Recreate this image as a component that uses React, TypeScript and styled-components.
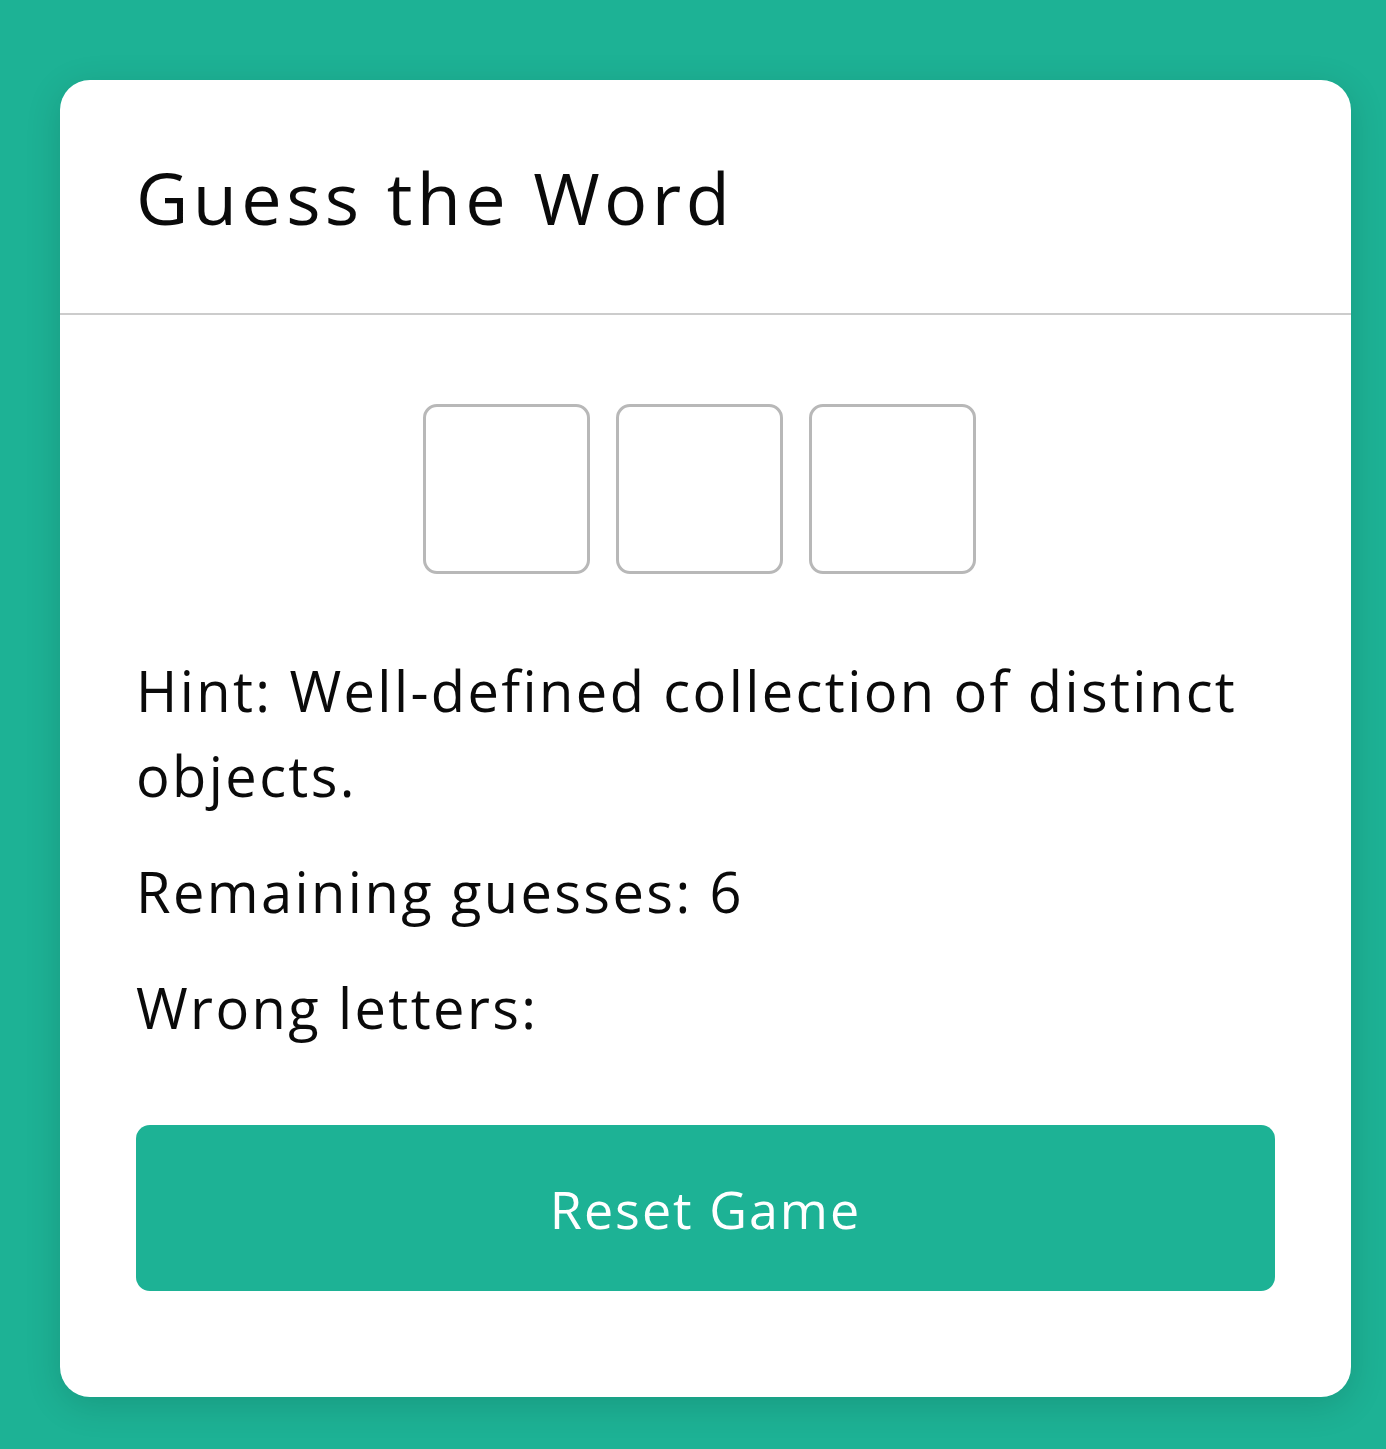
import styled, { createGlobalStyle } from 'styled-components';

const GlobalStyle = createGlobalStyle`
    body {
        margin: 0;
        background-color: #1db295;
        font-family: "Open Sans", "Noto Sans", sans-serif;
        color: #0a0a0a;
    }
`;

const letters = ['', '', ''];

const App = () => {
    return (
        <>
            <GlobalStyle />
            <Page>
                <Card>
                    <Header>
                        <Title>Guess the Word</Title>
                    </Header>
                    <Body>
                        <Slots>
                            {letters.map((letter, index) => (
                                <Slot key={index}>{letter}</Slot>
                            ))}
                        </Slots>
                        <Info>Hint: Well-defined collection of distinct objects.</Info>
                        <Info>Remaining guesses: 6</Info>
                        <Info>Wrong letters: </Info>
                        <ResetButton>Reset Game</ResetButton>
                    </Body>
                </Card>
            </Page>
        </>
    );
};

const Page = styled.main`
    padding: 80px 35px 53px 60px;
`;

const Card = styled.article`
    background-color: white;
    border-radius: 30px;
    box-shadow: 0 8px 36px rgba(0, 0, 0, 0.14);
    overflow: hidden;
`;

const Header = styled.header`
    height: 233px;
    display: flex;
    align-items: center;
    padding: 0 76px;
    border-bottom: 2px solid #cccccc;
`;

const Title = styled.h1`
    margin: 0;
    font-size: 72px;
    font-weight: 500;
    letter-spacing: 4.4px;
`;

const Body = styled.section`
    padding: 89px 76px 106px;
`;

const Slots = styled.div`
    display: flex;
    justify-content: center;
    gap: 26px;
    margin-bottom: 74px;
    padding-right: 12px;
`;

const Slot = styled.div`
    width: 161px;
    height: 164px;
    border: 3px solid #b8b8b8;
    border-radius: 14px;
`;

const Info = styled.p`
    margin: 0 0 31px;
    font-size: 56px;
    line-height: 85px;
    letter-spacing: 2.4px;
`;

const ResetButton = styled.button`
    display: block;
    width: 100%;
    height: 166px;
    margin-top: 75px;
    border: none;
    border-radius: 14px;
    background-color: #1db295;
    color: white;
    font-family: inherit;
    font-size: 52px;
    letter-spacing: 2px;
    cursor: pointer;
`;

export default App;
